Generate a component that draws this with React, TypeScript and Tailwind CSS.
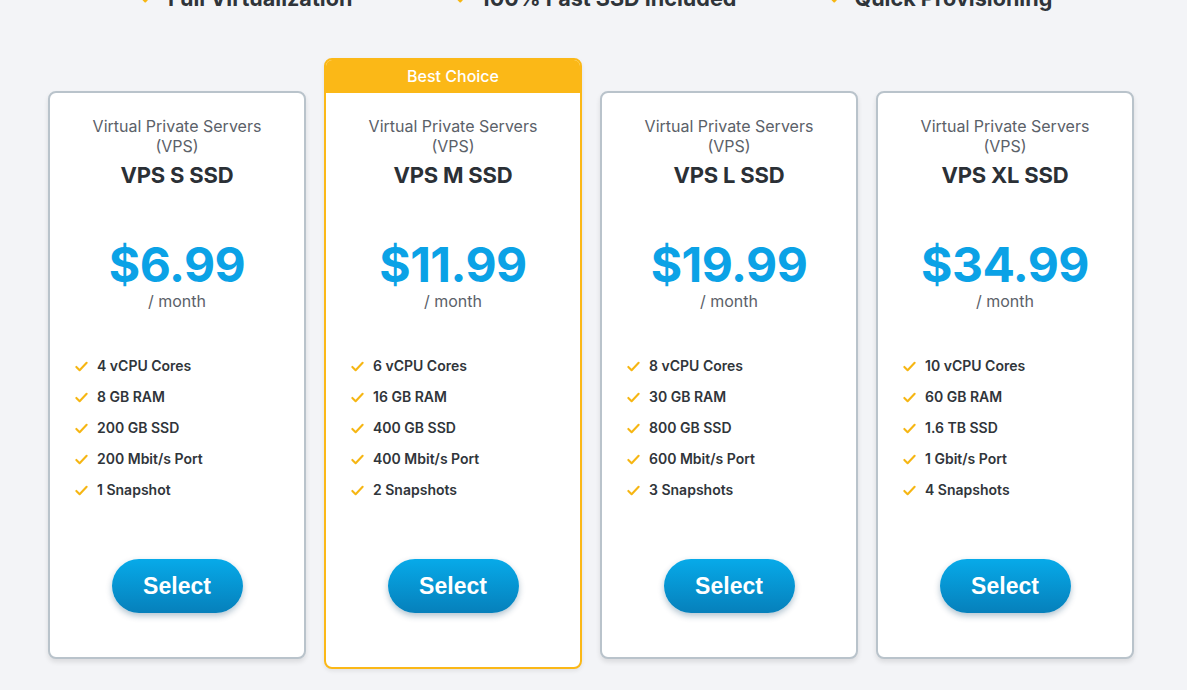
import React from "react";

type Plan = {
  name: string;
  price: string;
  features: string[];
  best?: boolean;
};

const plans: Plan[] = [
  { name: "VPS S SSD", price: "$6.99", features: ["4 vCPU Cores", "8 GB RAM", "200 GB SSD", "200 Mbit/s Port", "1 Snapshot"] },
  { name: "VPS M SSD", price: "$11.99", features: ["6 vCPU Cores", "16 GB RAM", "400 GB SSD", "400 Mbit/s Port", "2 Snapshots"], best: true },
  { name: "VPS L SSD", price: "$19.99", features: ["8 vCPU Cores", "30 GB RAM", "800 GB SSD", "600 Mbit/s Port", "3 Snapshots"] },
  { name: "VPS XL SSD", price: "$34.99", features: ["10 vCPU Cores", "60 GB RAM", "1.6 TB SSD", "1 Gbit/s Port", "4 Snapshots"] },
];

function Check({ className = "" }: { className?: string }) {
  return (
    <svg viewBox="0 0 16 16" className={className} fill="none" stroke="#f6b613" strokeWidth="2.2" strokeLinecap="round" strokeLinejoin="round">
      <path d="M2.5 8.5l3.5 3.5 7.5-8" />
    </svg>
  );
}

function PlanCard({ plan }: { plan: Plan }) {
  const body = (
    <div className="flex flex-col items-center px-[24px] pt-[23px]">
      <p className="text-[16px] leading-[20px] text-[#5b6169] text-center">
        Virtual Private Servers
        <br />
        (VPS)
      </p>
      <h3 className="mt-[5px] text-[22px] leading-[28px] font-bold text-[#2b3036] tracking-[-0.2px]">{plan.name}</h3>
      <div className="mt-[52px] text-[48px] leading-[48px] font-bold text-[#0ba2e6] tracking-[-0.5px]">{plan.price}</div>
      <div className="mt-[2px] text-[16px] leading-[20px] text-[#5b6169]">/ month</div>

      {/* Features */}
      <ul className="mt-[45px] flex w-full flex-col gap-[11px]">
        {plan.features.map((f) => (
          <li key={f} className="flex items-center gap-[8px] text-[14px] leading-[20px] font-semibold text-[#30353a]">
            <Check className="h-[15px] w-[15px] shrink-0" />
            {f}
          </li>
        ))}
      </ul>

      <button
        className={`mt-[59px] h-[54px] w-[131px] rounded-full bg-gradient-to-b from-[#07aae9] to-[#0680bb] text-[23px] font-bold text-white shadow-[0_3px_6px_rgba(0,60,100,0.3)] ${plan.best ? "mb-[54px]" : "mb-[44px]"}`}
        style={{ fontFamily: '"Liberation Sans", Arial, sans-serif' }}
      >
        Select
      </button>
    </div>
  );

  if (plan.best) {
    return (
      <div className="w-[258px] mt-[-33px] rounded-[8px] border-2 border-[#fbb817] bg-white shadow-[0_2px_4px_rgba(0,0,0,0.08)] overflow-hidden">
        <div className="h-[33px] pb-[2px] bg-[#fbb817] flex items-center justify-center text-[16px] font-medium text-white">Best Choice</div>
        {body}
      </div>
    );
  }

  return (
    <div className="w-[258px] rounded-[8px] border-2 border-[#b9c3cb] bg-white shadow-[0_3px_5px_rgba(0,0,0,0.1)]">
      {body}
    </div>
  );
}

export default function App() {
  return (
    <div className="h-[690px] w-full overflow-hidden bg-[#f3f4f7]" style={{ fontFamily: 'Inter, "Noto Sans", sans-serif' }}>
      {/* Top highlights, cut off by the viewport */}
      <div className="mt-[-15px] flex h-[26px] items-center text-[21.6px] font-bold text-[#2f343a]">
        <div className="ml-[140px] flex items-center gap-[14px]">
          <Check className="h-[14px] w-[14px]" />
          <span>Full Virtualization</span>
        </div>
        <div className="ml-[103px] flex items-center gap-[11px]">
          <Check className="h-[14px] w-[14px]" />
          <span>100% Fast SSD Included</span>
        </div>
        <div className="ml-[93px] flex items-center gap-[11px]">
          <Check className="h-[14px] w-[14px]" />
          <span>Quick Provisioning</span>
        </div>
      </div>

      <div className="mt-[80px] flex items-start gap-[18px] pl-[48px]">
        {plans.map((p) => (
          <PlanCard key={p.name} plan={p} />
        ))}
      </div>
    </div>
  );
}
